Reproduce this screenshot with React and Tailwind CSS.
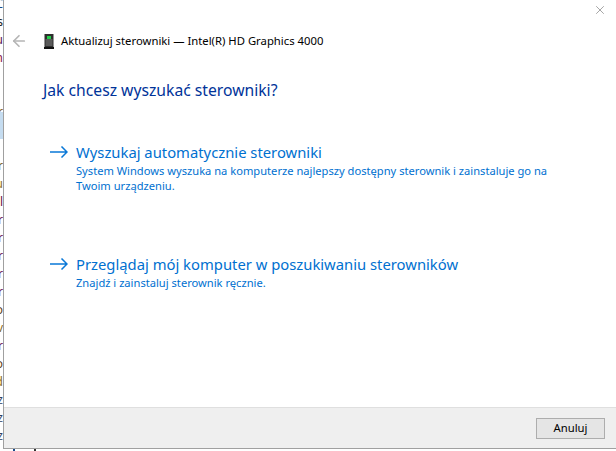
import { ArrowLeft, X } from 'lucide-react'

const stripRows = [
  { letter: 'C', color: 'text-[#1a4a8a]' },
  { letter: 's', color: 'text-[#222222]' },
  { letter: 'u', color: 'text-[#5a1050]' },
  { letter: 'n', color: 'text-[#8a1040]' },
  { letter: '', color: '' },
  { letter: '', color: '' },
  { letter: 'r', color: 'text-[#8a5a10]' },
  { letter: '', color: '', sel: true },
  { letter: '', color: '' },
  { letter: 'r', color: 'text-[#7a5a20]' },
  { letter: 'u', color: 'text-[#8a6a20]' },
  { letter: 'l', color: 'text-[#6a1040]' },
  { letter: 'r', color: 'text-[#701050]' },
  { letter: 'r', color: 'text-[#701050]' },
  { letter: 'r', color: 'text-[#701050]' },
  { letter: 'r', color: 'text-[#701050]' },
  { letter: 'r', color: 'text-[#701050]' },
  { letter: 'o', color: 'text-[#604020]' },
  { letter: 'v', color: 'text-[#8a6a20]' },
  { letter: 'r', color: 'text-[#701050]' },
  { letter: 'o', color: 'text-[#604020]' },
  { letter: 'd', color: 'text-[#8a6a20]' },
  { letter: 'z', color: 'text-[#304060]' },
  { letter: 'z', color: 'text-[#304060]' },
  { letter: 'z', color: 'text-[#304060]' },
]

function Option({ title, children }) {
  return (
    <div className="flex items-start">
      <svg width="18" height="12" viewBox="0 0 18 12" fill="none" className="ml-[-1px] mt-[5px] shrink-0 text-[#0a78d7]">
        <path d="M0 6H17M11.5 0.5L17 6L11.5 11.5" stroke="currentColor" strokeWidth="1.5" />
      </svg>
      <div className="ml-[8px]">
        <div className="text-[14.8px] leading-[22px] text-[#0070d0]">{title}</div>
        <div className="text-[11.15px] leading-[15px] text-[#0070d0]">{children}</div>
      </div>
    </div>
  )
}

export default function App() {
  return (
    <div className="w-[616px] h-[451px] overflow-hidden bg-white flex font-['Noto_Sans','Open_Sans',sans-serif]">
      {/* okno pod spodem, widac tylko kawalek */}
      <div className="w-[3px] shrink-0 overflow-hidden flex flex-col">
        {stripRows.map((row, i) => (
          <div key={i} className={`shrink-0 flex items-center justify-end text-[12px] leading-none ${i === 0 ? '-mt-[5px]' : ''} ${row.color} ${row.sel ? 'h-[27px] -mt-[9px] bg-[#c5dcf0]' : 'h-[18px]'}`}>
            {row.letter}
          </div>
        ))}
      </div>

      <div className="flex-1 flex flex-col">
        <div className="h-[449px] flex flex-col border-l border-b border-[#a0a0a0]">
          <div className="h-[31px] flex items-start justify-end pr-[9px] pt-[3px]">
            <X size={14} strokeWidth={1} className="text-[#666666]" />
          </div>

          <div className="flex items-center h-[20px] pl-[6px]">
            <ArrowLeft size={18} strokeWidth={2.25} className="text-[#b5b5b5]" />
            <svg width="10" height="15" viewBox="0 0 10 15" className="ml-[16px]">
              <rect x="0.5" y="0" width="9" height="13" fill="#2e2e2e" />
              <rect x="1.5" y="5" width="7" height="7" fill="#5a5a5a" />
              <rect x="3" y="2" width="4" height="3" fill="#22d04a" />
              <rect x="0" y="13" width="10" height="2" fill="#111111" />
            </svg>
            <span className="ml-[7px] text-[11.3px] text-black">Aktualizuj sterowniki — Intel(R) HD Graphics 4000</span>
          </div>

          <div className="flex-1 pl-[39px] pt-[28px] flex flex-col">
            <h1 className="text-[15.7px] leading-[22px] text-[#003399] font-normal">Jak chcesz wyszukać sterowniki?</h1>
            <div className="mt-[40px] pl-[8px] w-[520px]">
              <Option title="Wyszukaj automatycznie sterowniki">
                System Windows wyszuka na komputerze najlepszy dostępny sterownik i zainstaluje go na Twoim urządzeniu.
              </Option>
            </div>
            <div className="mt-[60px] pl-[8px] w-[520px]">
              <Option title="Przeglądaj mój komputer w poszukiwaniu sterowników">
                Znajdź i zainstaluj sterownik ręcznie.
              </Option>
            </div>
          </div>

          <div className="h-[41px] bg-[#efefef] border-t border-[#dfdfdf] flex items-center justify-end pr-[11px]">
            <button className="w-[69px] h-[21px] border border-[#adadad] bg-[#e5e5e5] text-[11.3px] text-black leading-none">Anuluj</button>
          </div>
        </div>

        <div className="h-[2px] flex">
          <div className="ml-[10px] w-[2px] h-[2px] bg-[#1a4a8a]" />
          <div className="ml-[19px] w-[2px] h-[2px] bg-[#333333]" />
        </div>
      </div>
    </div>
  )
}
